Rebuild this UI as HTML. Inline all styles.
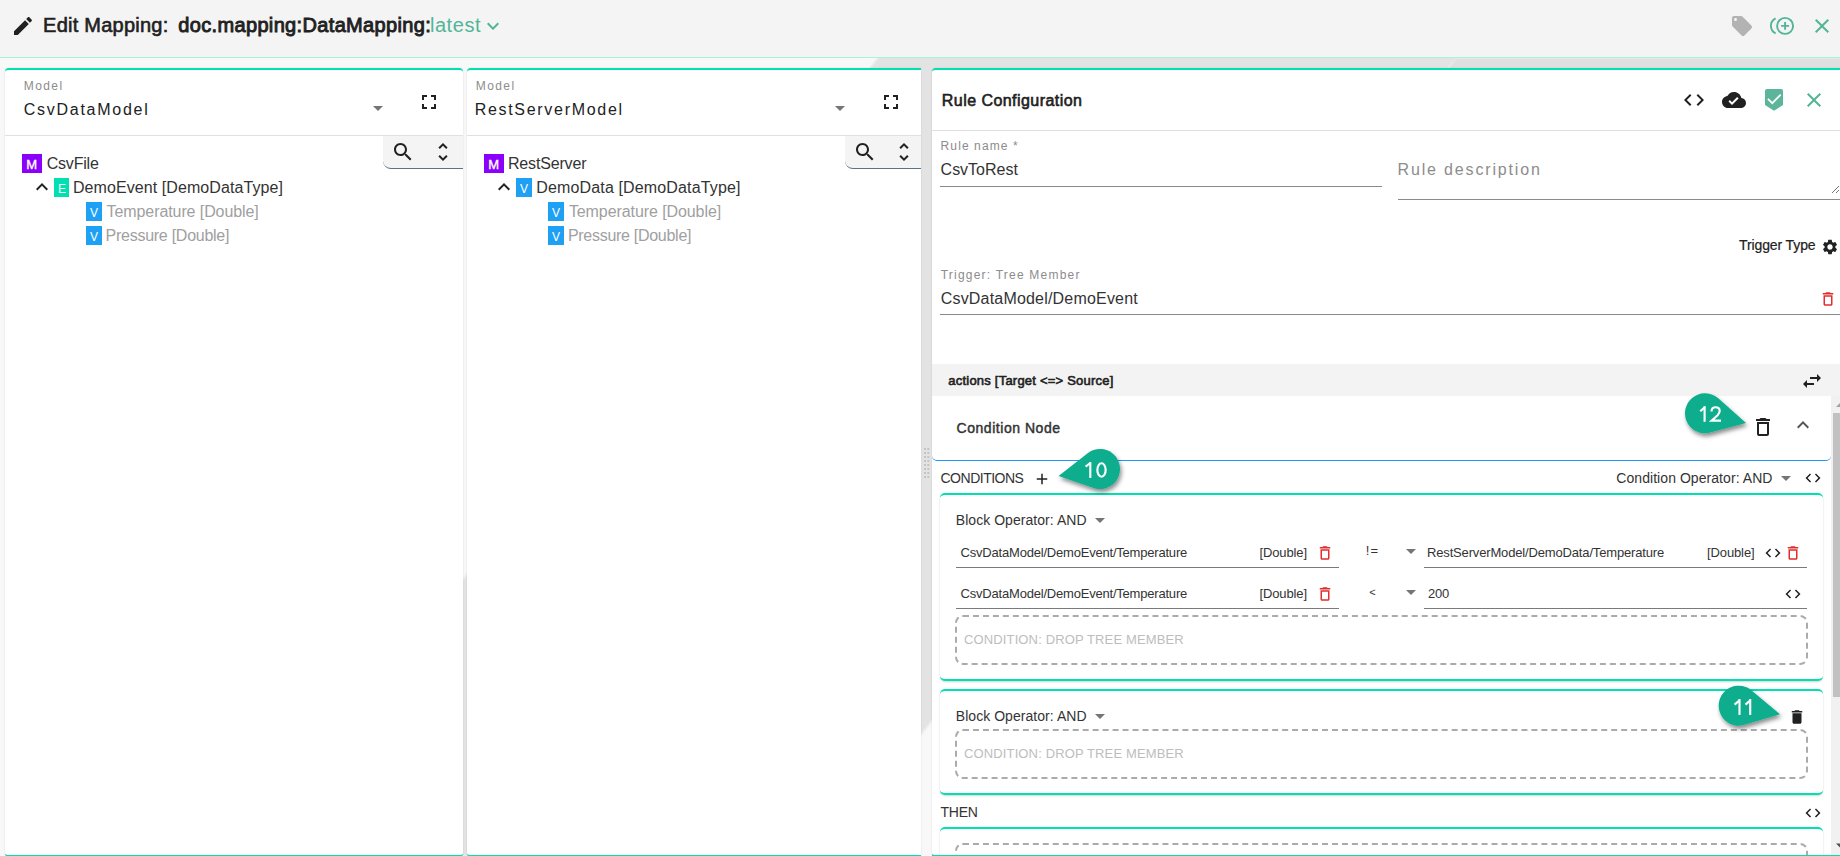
<!DOCTYPE html>
<html><head><meta charset="utf-8">
<title>Edit Mapping</title>
<style>
*{box-sizing:border-box;margin:0;padding:0}
html,body{width:1840px;height:856px;overflow:hidden;background:#f8f8f8;font-family:"Liberation Sans",sans-serif;color:#212121}
.a{position:absolute}
.t{position:absolute;white-space:nowrap;line-height:1}
svg{position:absolute;display:block;overflow:visible}
.panel{position:absolute;background:#fff;border-top:2px solid #00e0b0;border-bottom:2px solid #00e0b0;border-radius:4px;box-shadow:0 0 1.5px rgba(0,0,0,.16)}
.hl{position:absolute;height:1px}
.tab{position:absolute;top:136px;height:33px;background:#f4f4f4;border-bottom:1px solid #5d7282;border-bottom-left-radius:8px}
.card{position:absolute;background:#fff;border-top:2px solid #00e0b0;border-bottom:2px solid #00e0b0;border-radius:5px;box-shadow:0 1px 2px rgba(0,0,0,.18)}
.dash{position:absolute;border:2px dashed #ababab;border-radius:8px}
</style></head><body>
<!-- background stripes -->
<svg style="left:0;top:0" width="1840" height="856" viewBox="0 0 1840 856">
<defs><filter id="bl" x="-5%" y="-5%" width="110%" height="110%"><feGaussianBlur stdDeviation="1.2"/></filter></defs>
<polygon points="924,0 1502,0 825,856 243,856" fill="#e3e3e3" filter="url(#bl)"/>
<polygon points="1456,58 1900,58 1900,70 1447,70" fill="#dfdfdf" filter="url(#bl)"/>
</svg>
<!-- top bar -->
<div class="a" style="left:0;top:0;width:1840px;height:57px;background:#f4f4f4"></div>
<div class="a" style="left:0;top:57px;width:1840px;height:1px;background:#a6f2dd"></div>
<svg style="left:10.8px;top:14px" width="24" height="24" viewBox="0 0 24 24"><path fill="#212121" d="M3 17.25V21h3.75L17.81 9.94l-3.75-3.75L3 17.25zM20.71 7.04c.39-.39.39-1.02 0-1.41l-2.34-2.34c-.39-.39-1.02-.39-1.41 0l-1.83 1.83 3.75 3.75 1.83-1.83z"/></svg>
<svg style="left:481.4px;top:14.4px" width="24" height="24" viewBox="0 0 24 24"><path fill="#52b596" d="M16.59 8.59L12 13.17 7.41 8.59 6 10l6 6 6-6z"/></svg>
<!-- tag -->
<svg style="left:1729.7px;top:13.9px" width="24" height="24" viewBox="0 0 24 24"><path fill="#b3b3b3" d="M21.41 11.58l-9-9C12.05 2.22 11.55 2 11 2H4c-1.1 0-2 .9-2 2v7c0 .55.22 1.05.59 1.42l9 9c.36.36.86.58 1.41.58.55 0 1.05-.22 1.41-.59l7-7c.37-.36.59-.86.59-1.41 0-.55-.23-1.06-.59-1.42zM5.5 7C4.67 7 4 6.33 4 5.5S4.67 4 5.5 4 7 4.67 7 5.5 6.33 7 5.5 7z"/></svg>
<!-- add circle with arc -->
<svg style="left:1768px;top:14px" width="28" height="24" viewBox="0 0 28 24">
<circle cx="17.1" cy="11.9" r="8" fill="none" stroke="#52b596" stroke-width="1.9"/>
<path d="M17.1 8v7.8M13.1 11.9h8" stroke="#52b596" stroke-width="1.9" fill="none"/>
<path d="M7.6 4.3 A8.4 8.4 0 0 0 7.6 19.4" stroke="#52b596" stroke-width="1.9" fill="none"/>
</svg>
<!-- close -->
<svg style="left:1810px;top:14.3px" width="24" height="24" viewBox="0 0 24 24"><path fill="#52b596" d="M19 6.41L17.59 5 12 10.59 6.41 5 5 6.41 10.59 12 5 17.59 6.41 19 12 13.41 17.59 19 19 17.59 13.41 12z"/></svg>

<!-- panels -->
<div class="panel" style="left:5px;top:68px;width:458px;height:789px"></div>
<div class="panel" style="left:467px;top:68px;width:454px;height:789px;border-radius:4px 0 0 4px"></div>
<div class="panel" style="left:932px;top:68px;width:920px;height:789px"></div>

<!-- panel 1 header -->
<svg style="left:366px;top:96px" width="24" height="24" viewBox="0 0 24 24"><path fill="#757575" d="M7 10l5 5 5-5z"/></svg>
<svg style="left:416.9px;top:89.9px" width="24" height="24" viewBox="0 0 24 24"><path fill="#212121" d="M7 14H5v5h5v-2H7v-3zm-2-4h2V7h3V5H5v5zm12 7h-3v2h5v-5h-2v3zM14 5v2h3v3h2V5h-5z"/></svg>
<div class="hl" style="left:5px;top:135px;width:458px;background:#e0e0e0"></div>
<div class="tab" style="left:383px;width:80px"></div>
<svg style="left:391px;top:140px" width="24" height="24" viewBox="0 0 24 24"><path fill="#212121" d="M15.5 14h-.79l-.28-.27C15.41 12.59 16 11.11 16 9.5 16 5.91 13.09 3 9.5 3S3 5.91 3 9.5 5.91 16 9.5 16c1.61 0 3.09-.59 4.23-1.57l.27.28v.79l5 4.99L20.49 19l-4.99-5zm-6 0C7.01 14 5 11.990 5 9.5S7.01 5 9.5 5 14 7.01 14 9.5 11.99 14 9.5 14z"/></svg>
<svg style="left:431px;top:140.2px" width="24" height="24" viewBox="0 0 24 24"><path fill="#212121" d="M12 5.83L15.17 9l1.41-1.41L12 3 7.41 7.59 8.83 9 12 5.83zm0 12.34L8.83 15l-1.41 1.41L12 21l4.59-4.59L15.17 15 12 18.170z"/></svg>
<!-- panel 1 tree -->
<div class="a" style="left:22px;top:154px;width:20px;height:19px;background:#8a00fa"></div>
<div class="a" style="left:54px;top:178px;width:15px;height:19px;background:#00e0b0"></div>
<div class="a" style="left:86px;top:202px;width:16px;height:19px;background:#1ea0f5"></div>
<div class="a" style="left:86px;top:226px;width:16px;height:19px;background:#1ea0f5"></div>
<svg style="left:30px;top:175.3px" width="24" height="24" viewBox="0 0 24 24"><path fill="#212121" d="M12 8l-6 6 1.41 1.41L12 10.83l4.59 4.58L18 14z"/></svg>
<!-- panel 2 header -->
<svg style="left:828.4px;top:96px" width="24" height="24" viewBox="0 0 24 24"><path fill="#757575" d="M7 10l5 5 5-5z"/></svg>
<svg style="left:879px;top:89.9px" width="24" height="24" viewBox="0 0 24 24"><path fill="#212121" d="M7 14H5v5h5v-2H7v-3zm-2-4h2V7h3V5H5v5zm12 7h-3v2h5v-5h-2v3zM14 5v2h3v3h2V5h-5z"/></svg>
<div class="hl" style="left:467px;top:135px;width:454px;background:#e0e0e0"></div>
<div class="tab" style="left:845px;width:76px"></div>
<svg style="left:852.8px;top:140px" width="24" height="24" viewBox="0 0 24 24"><path fill="#212121" d="M15.5 14h-.79l-.28-.27C15.41 12.590 16 11.11 16 9.5 16 5.91 13.09 3 9.5 3S3 5.91 3 9.5 5.91 16 9.5 16c1.61 0 3.09-.59 4.23-1.57l.27.28v.79l5 4.99L20.49 19l-4.99-5zm-6 0C7.01 14 5 11.99 5 9.5S7.01 5 9.5 5 14 7.01 14 9.5 11.99 14 9.5 14z"/></svg>
<svg style="left:892.4px;top:140.2px" width="24" height="24" viewBox="0 0 24 24"><path fill="#212121" d="M12 5.83L15.17 9l1.41-1.41L12 3 7.41 7.59 8.83 9 12 5.83zm0 12.34L8.83 15l-1.41 1.41L12 21l4.59-4.59L15.17 15 12 18.17z"/></svg>
<!-- panel 2 tree -->
<div class="a" style="left:484px;top:154px;width:20px;height:19px;background:#8a00fa"></div>
<div class="a" style="left:516px;top:178px;width:16px;height:19px;background:#1ea0f5"></div>
<div class="a" style="left:548px;top:202px;width:16px;height:19px;background:#1ea0f5"></div>
<div class="a" style="left:548px;top:226px;width:16px;height:19px;background:#1ea0f5"></div>
<svg style="left:492.4px;top:175.3px" width="24" height="24" viewBox="0 0 24 24"><path fill="#212121" d="M12 8l-6 6 1.41 1.41L12 10.83l4.59 4.58L18 14z"/></svg>

<!-- right panel header -->
<div class="hl" style="left:932px;top:130px;width:908px;background:#e0e0e0"></div>
<svg style="left:1682px;top:87.8px" width="24" height="24" viewBox="0 0 24 24"><path fill="#212121" d="M9.4 16.6L4.8 12l4.6-4.6L8 6l-6 6 6 6 1.4-1.4zm5.2 0l4.6-4.6-4.6-4.6L16 6l6 6-6 6-1.4-1.4z"/></svg>
<svg style="left:1722px;top:88px" width="24" height="24" viewBox="0 0 24 24"><path fill="#212121" d="M19.35 10.04C18.67 6.59 15.64 4 12 4 9.11 4 6.6 5.64 5.35 8.04 2.34 8.36 0 10.91 0 14c0 3.31 2.690 6 6 6h13c2.76 0 5-2.24 5-5 0-2.64-2.05-4.78-4.65-4.96zM10 17l-3.5-3.5 1.41-1.41L10 14.17 15.18 9l1.41 1.41L10 17z"/></svg>
<svg style="left:1765px;top:89px" width="18" height="22" viewBox="0 0 18 22"><path fill="#5cb59a" d="M2 0h14a2 2 0 0 1 2 2v14l-9 5.8-9-5.8V2a2 2 0 0 1 2-2z"/><path d="M2.9 9.8l4.4 4.4 8.4-8.6" stroke="#fff" stroke-width="1.8" fill="none"/></svg>
<svg style="left:1802px;top:88px" width="24" height="24" viewBox="0 0 24 24"><path fill="#52b596" d="M19 6.41L17.59 5 12 10.59 6.41 5 5 6.41 10.59 12 5 17.59 6.41 19 12 13.41 17.59 19 19 17.59 13.41 12z"/></svg>
<!-- fields -->
<div class="hl" style="left:940px;top:186px;width:442px;background:#8a8a8a"></div>
<div class="hl" style="left:1398px;top:199px;width:442px;background:#8a8a8a"></div>
<svg style="left:1830px;top:184px" width="10" height="10" viewBox="0 0 10 10"><path d="M2 9L9 2M6 9L9 6" stroke="#666" stroke-width="0.9"/></svg>
<svg style="left:1820.6px;top:238.4px" width="18" height="18" viewBox="0 0 24 24"><path fill="#212121" d="M19.14 12.94c.04-.3.06-.61.06-.94 0-.32-.02-.64-.07-.94l2.03-1.58c.18-.14.23-.41.12-.61l-1.92-3.32c-.12-.22-.37-.29-.59-.22l-2.39.96c-.5-.38-1.03-.7-1.62-.94l-.36-2.54c-.04-.24-.24-.41-.48-.41h-3.840c-.24 0-.43.17-.47.41l-.36 2.54c-.59.24-1.13.57-1.62.94l-2.39-.96c-.22-.08-.47 0-.59.22L2.74 8.87c-.12.21-.08.47.12.61l2.03 1.58c-.05.3-.09.63-.09.94s.02.64.07.94l-2.03 1.58c-.18.14-.23.41-.12.61l1.92 3.32c.12.22.37.29.59.22l2.39-.96c.5.38 1.03.7 1.62.94l.36 2.54c.05.24.24.41.48.41h3.84c.24 0 .44-.17.47-.41l.36-2.54c.59-.24 1.13-.56 1.62-.94l2.39.96c.22.08.47 0 .59-.22l1.92-3.32c.12-.22.07-.47-.12-.61l-2.01-1.58zM12 15.6c-1.98 0-3.6-1.62-3.6-3.6s1.62-3.6 3.6-3.6 3.6 1.62 3.6 3.6-1.62 3.6-3.6 3.6z"/></svg>
<svg style="left:1819.1px;top:289.8px" width="18" height="18" viewBox="0 0 24 24"><path fill="#e22d2d" d="M6 19c0 1.1.9 2 2 2h8c1.1 0 2-.9 2-2V7H6v12zM8 9h8v10H8V9zm7.5-5l-1-1h-5l-1 1H5v2h14V4z"/></svg>
<div class="hl" style="left:940px;top:314px;width:900px;background:#8a8a8a"></div>
<!-- actions bar -->
<div class="a" style="left:932px;top:364px;width:908px;height:32px;background:#f3f3f3"></div>
<svg style="left:1800px;top:369px" width="24" height="24" viewBox="0 0 24 24"><path fill="#212121" d="M6.99 11L3 15l3.99 4v-3H14v-2H6.99v-3zM21 9l-3.99-4v3H10v2h7.01v3L21 9z"/></svg>
<!-- scrollbar -->
<div class="a" style="left:1831px;top:396px;width:9px;height:460px;background:#f1f1f1"></div>
<div class="a" style="left:1833px;top:413px;width:7px;height:284px;background:#c1c1c1"></div>
<svg style="left:1831px;top:400px" width="9" height="8" viewBox="0 0 9 8"><path d="M5 7L9.5 2.5 14 7z" fill="#a3a3a3"/></svg>
<svg style="left:1831px;top:842px" width="9" height="8" viewBox="0 0 9 8"><path d="M5 1.5L9.5 6 14 1.5z" fill="#505050"/></svg>
<!-- condition node card -->
<div class="a" style="left:932px;top:396px;width:899px;height:65px;background:#fff;border-bottom:1px solid #2196f3;border-radius:0 5px 5px 5px"></div>
<svg style="left:1751px;top:415px" width="24" height="24" viewBox="0 0 24 24"><path fill="#212121" d="M6 19c0 1.1.9 2 2 2h8c1.1 0 2-.9 2-2V7H6v12zM8 9h8v10H8V9zm7.5-5l-1-1h-5l-1 1H5v2h14V4z"/></svg>
<svg style="left:1791px;top:413px" width="24" height="24" viewBox="0 0 24 24"><path fill="#555" d="M12 8l-6 6 1.41 1.41L12 10.83l4.59 4.58L18 14z"/></svg>
<!-- drag dots -->
<svg style="left:923px;top:448px" width="8" height="32" viewBox="0 0 8 32"><g fill="#c4c4c4">
<rect x="1" y="0" width="2" height="2"/><rect x="4.3" y="0" width="2" height="2"/>
<rect x="1" y="4" width="2" height="2"/><rect x="4.3" y="4" width="2" height="2"/>
<rect x="1" y="8" width="2" height="2"/><rect x="4.3" y="8" width="2" height="2"/>
<rect x="1" y="12" width="2" height="2"/><rect x="4.3" y="12" width="2" height="2"/>
<rect x="1" y="16" width="2" height="2"/><rect x="4.3" y="16" width="2" height="2"/>
<rect x="1" y="20" width="2" height="2"/><rect x="4.3" y="20" width="2" height="2"/>
<rect x="1" y="24" width="2" height="2"/><rect x="4.3" y="24" width="2" height="2"/>
<rect x="1" y="28" width="2" height="2"/><rect x="4.3" y="28" width="2" height="2"/>
</g></svg>
<!-- conditions row -->
<svg style="left:1033px;top:470.3px" width="18" height="18" viewBox="0 0 24 24"><path fill="#212121" d="M19 13h-6v6h-2v-6H5v-2h6V5h2v6h6v2z"/></svg>
<svg style="left:1774px;top:466px" width="24" height="24" viewBox="0 0 24 24"><path fill="#757575" d="M7 10l5 5 5-5z"/></svg>
<svg style="left:1803.5px;top:468.6px" width="18" height="18" viewBox="0 0 24 24"><path fill="#212121" d="M9.4 16.6L4.8 12l4.6-4.6L8 6l-6 6 6 6 1.4-1.4zm5.2 0l4.6-4.6-4.6-4.6L16 6l6 6-6 6-1.4-1.4z"/></svg>

<!-- block card 1 -->
<div class="card" style="left:940px;top:493px;width:883px;height:188px"></div>
<svg style="left:1087.8px;top:508px" width="24" height="24" viewBox="0 0 24 24"><path fill="#757575" d="M7 10l5 5 5-5z"/></svg>
<div class="hl" style="left:956px;top:567px;width:383px;background:#7a7a7a"></div>
<div class="hl" style="left:1424px;top:567px;width:383px;background:#7a7a7a"></div>
<div class="hl" style="left:956px;top:608px;width:383px;background:#7a7a7a"></div>
<div class="hl" style="left:1424px;top:608px;width:383px;background:#7a7a7a"></div>
<svg style="left:1316.2px;top:543.8px" width="18" height="18" viewBox="0 0 24 24"><path fill="#e22d2d" d="M6 19c0 1.1.9 2 2 2h8c1.1 0 2-.9 2-2V7H6v12zM8 9h8v10H8V9zm7.5-5l-1-1h-5l-1 1H5v2h14V4z"/></svg>
<svg style="left:1316.2px;top:585px" width="18" height="18" viewBox="0 0 24 24"><path fill="#e22d2d" d="M6 19c0 1.1.9 2 2 2h8c1.1 0 2-.9 2-2V7H6v12zM8 9h8v10H8V9zm7.5-5l-1-1h-5l-1 1H5v2h14V4z"/></svg>
<svg style="left:1399px;top:538.7px" width="24" height="24" viewBox="0 0 24 24"><path fill="#757575" d="M7 10l5 5 5-5z"/></svg>
<svg style="left:1399px;top:579.8px" width="24" height="24" viewBox="0 0 24 24"><path fill="#757575" d="M7 10l5 5 5-5z"/></svg>
<svg style="left:1763.5px;top:544.3px" width="18" height="18" viewBox="0 0 24 24"><path fill="#212121" d="M9.4 16.6L4.8 12l4.6-4.6L8 6l-6 6 6 6 1.4-1.4zm5.2 0l4.6-4.6-4.6-4.6L16 6l6 6-6 6-1.4-1.4z"/></svg>
<svg style="left:1783.8px;top:543.8px" width="18" height="18" viewBox="0 0 24 24"><path fill="#e22d2d" d="M6 19c0 1.1.9 2 2 2h8c1.1 0 2-.9 2-2V7H6v12zM8 9h8v10H8V9zm7.5-5l-1-1h-5l-1 1H5v2h14V4z"/></svg>
<svg style="left:1783.5px;top:585px" width="18" height="18" viewBox="0 0 24 24"><path fill="#212121" d="M9.4 16.6L4.8 12l4.6-4.6L8 6l-6 6 6 6 1.4-1.4zm5.2 0l4.6-4.6-4.6-4.6L16 6l6 6-6 6-1.4-1.4z"/></svg>
<div class="dash" style="left:955px;top:615px;width:853px;height:50px"></div>

<!-- block card 2 -->
<div class="card" style="left:940px;top:689px;width:883px;height:106px"></div>
<svg style="left:1088px;top:703.8px" width="24" height="24" viewBox="0 0 24 24"><path fill="#757575" d="M7 10l5 5 5-5z"/></svg>
<svg style="left:1788.3px;top:707.8px" width="18" height="18" viewBox="0 0 24 24"><path fill="#212121" d="M6 19c0 1.1.9 2 2 2h8c1.1 0 2-.9 2-2V7H6v12zM19 4h-3.5l-1-1h-5l-1 1H5v2h14V4z"/></svg>
<div class="dash" style="left:955px;top:729px;width:853px;height:50px"></div>
<!-- then -->
<svg style="left:1803.5px;top:804.3px" width="18" height="18" viewBox="0 0 24 24"><path fill="#212121" d="M9.4 16.6L4.8 12l4.6-4.6L8 6l-6 6 6 6 1.4-1.4zm5.2 0l4.6-4.6-4.6-4.6L16 6l6 6-6 6-1.4-1.4z"/></svg>
<div class="card" style="left:940px;top:827px;width:883px;height:80px"></div>
<div class="dash" style="left:955px;top:843px;width:853px;height:60px"></div>
<!-- panel bottom border overlay for right panel -->
<div class="a" style="left:932px;top:855px;width:908px;height:2px;background:#00e0b0"></div>

<!-- callouts -->
<svg style="left:0;top:0" width="1840" height="856" viewBox="0 0 1840 856">
<defs><filter id="sh" x="-30%" y="-30%" width="160%" height="170%"><feDropShadow dx="1.5" dy="3" stdDeviation="2.2" flood-color="#000" flood-opacity="0.45"/></filter></defs>
<path filter="url(#sh)" fill="#0aad8e" d="M1058.6,476.0 L1087.67,453.25 A20,20 0 1 1 1093.54,487.93 Z"/>
<path filter="url(#sh)" fill="#0aad8e" d="M1746.0,422.9 L1710.24,432.60 A20,20 0 1 1 1718.26,398.33 Z"/>
<path filter="url(#sh)" fill="#0aad8e" d="M1780.0,714.3 L1744.39,724.87 A20,20 0 1 1 1751.57,690.39 Z"/>
</svg>
<svg style="left:0;top:0" width="1840" height="856" viewBox="0 0 1840 856">
<g fill="none" stroke="#fff" stroke-width="2.15">
<path d="M1085.6,466.6 L1090.3,463.0"/><path d="M1090.3,462.1 V477.9"/>
<ellipse cx="1101.5" cy="470" rx="4.15" ry="6.75"/>
<path d="M1700.3,411.2 L1704.8,407.2"/><path d="M1704.6,406.2 V421.8"/>
<path d="M1711.5,411.6 C1711.5,408.9 1713.3,407.2 1715.7,407.2 C1718.2,407.2 1719.7,408.9 1719.7,411.1 C1719.7,412.7 1719.0,413.7 1717.6,415.2 L1711.6,420.6 L1721,420.6"/>
<path d="M1734.6,704.6 L1739.6,700.2"/><path d="M1739.5,699.1 V714.9"/>
<path d="M1745.5,704.6 L1750.4,700.2"/><path d="M1750.2,699.1 V714.9"/>
</g></svg>
<div class="t" id="edit" style="left:43.10px;top:15px;font-size:20px;color:#212121;-webkit-text-stroke:0.6px #212121;letter-spacing:0.238px">Edit Mapping:</div>
<div class="t" id="docm" style="left:178.30px;top:15px;font-size:20px;color:#212121;-webkit-text-stroke:0.90px #212121;letter-spacing:0.342px">doc.mapping:DataMapping:</div>
<div class="t" id="latest" style="left:429.90px;top:15px;font-size:20px;color:#52b596;letter-spacing:0.571px">latest</div>
<div class="t" id="m1" style="left:23.70px;top:80px;font-size:12px;color:#8c8c8c;letter-spacing:1.446px">Model</div>
<div class="t" id="csvdm" style="left:23.70px;top:102px;font-size:16px;color:#212121;letter-spacing:1.739px">CsvDataModel</div>
<div class="t" id="csvfile" style="left:46.70px;top:156px;font-size:16px;color:#333333;letter-spacing:-0.190px">CsvFile</div>
<div class="t" id="demoev" style="left:72.90px;top:180px;font-size:16px;color:#333333;letter-spacing:0.085px">DemoEvent [DemoDataType]</div>
<div class="t" id="temp1" style="left:106.60px;top:204px;font-size:16px;color:#a0a0a0;letter-spacing:-0.090px">Temperature [Double]</div>
<div class="t" id="pres1" style="left:105.60px;top:228px;font-size:16px;color:#a0a0a0;letter-spacing:-0.264px">Pressure [Double]</div>
<div class="t" id="m2" style="left:475.70px;top:80px;font-size:12px;color:#8c8c8c;letter-spacing:1.446px">Model</div>
<div class="t" id="restm" style="left:474.70px;top:102px;font-size:16px;color:#212121;letter-spacing:1.697px">RestServerModel</div>
<div class="t" id="rests" style="left:507.90px;top:156px;font-size:16px;color:#333333;letter-spacing:-0.155px">RestServer</div>
<div class="t" id="demod" style="left:536.30px;top:180px;font-size:16px;color:#333333;letter-spacing:0.144px">DemoData [DemoDataType]</div>
<div class="t" id="temp2" style="left:568.90px;top:204px;font-size:16px;color:#a0a0a0;letter-spacing:-0.085px">Temperature [Double]</div>
<div class="t" id="pres2" style="left:567.90px;top:228px;font-size:16px;color:#a0a0a0;letter-spacing:-0.282px">Pressure [Double]</div>
<div class="t" id="rulecfg" style="left:941.80px;top:93px;font-size:16px;color:#212121;-webkit-text-stroke:0.6px #212121;letter-spacing:0.446px">Rule Configuration</div>
<div class="t" id="rname" style="left:940.60px;top:140px;font-size:12px;color:#8c8c8c;letter-spacing:1.103px">Rule name *</div>
<div class="t" id="csvtorest" style="left:940.60px;top:162px;font-size:16px;color:#333333;letter-spacing:-0.013px">CsvToRest</div>
<div class="t" id="rdesc" style="left:1397.50px;top:162px;font-size:16px;color:#8c8c8c;letter-spacing:1.845px">Rule description</div>
<div class="t" id="ttype" style="left:1739.00px;top:238px;font-size:14px;color:#212121;letter-spacing:-0.107px;-webkit-text-stroke:0.2px #212121">Trigger Type</div>
<div class="t" id="ttm" style="left:940.70px;top:269px;font-size:12px;color:#8c8c8c;letter-spacing:1.221px">Trigger: Tree Member</div>
<div class="t" id="csvdemo" style="left:940.70px;top:291px;font-size:16px;color:#333333;letter-spacing:0.194px">CsvDataModel/DemoEvent</div>
<div class="t" id="actions" style="left:948.30px;top:374px;font-size:13px;color:#212121;-webkit-text-stroke:0.59px #212121;letter-spacing:0.218px">actions [Target &lt;=&gt; Source]</div>
<div class="t" id="condnode" style="left:956.60px;top:421px;font-size:14px;color:#333333;-webkit-text-stroke:0.45px #333333;letter-spacing:0.529px">Condition Node</div>
<div class="t" id="conds" style="left:940.50px;top:471px;font-size:14px;color:#333333;letter-spacing:-0.495px">CONDITIONS</div>
<div class="t" id="condop" style="left:1616.30px;top:471px;font-size:14px;color:#333333;letter-spacing:0.058px">Condition Operator: AND</div>
<div class="t" id="blk1" style="left:955.80px;top:513px;font-size:14px;color:#333333;letter-spacing:0.044px">Block Operator: AND</div>
<div class="t" id="r1a" style="left:960.60px;top:546px;font-size:13px;color:#333333;letter-spacing:-0.204px">CsvDataModel/DemoEvent/Temperature</div>
<div class="t" id="r1d" style="left:1259.40px;top:546px;font-size:13px;color:#333333;letter-spacing:-0.101px">[Double]</div>
<div class="t" id="r1op" style="left:1365.80px;top:544px;font-size:13px;color:#333333;letter-spacing:1.088px">!=</div>
<div class="t" id="r1b" style="left:1427.00px;top:546px;font-size:13px;color:#333333;letter-spacing:-0.158px">RestServerModel/DemoData/Temperature</div>
<div class="t" id="r1d2" style="left:1707.00px;top:546px;font-size:13px;color:#333333;letter-spacing:-0.115px">[Double]</div>
<div class="t" id="r2a" style="left:960.60px;top:587px;font-size:13px;color:#333333;letter-spacing:-0.204px">CsvDataModel/DemoEvent/Temperature</div>
<div class="t" id="r2d" style="left:1259.40px;top:587px;font-size:13px;color:#333333;letter-spacing:-0.101px">[Double]</div>
<div class="t" id="r2op" style="left:1369.30px;top:587px;font-size:11px;color:#333333">&lt;</div>
<div class="t" id="r2b" style="left:1428.00px;top:587px;font-size:13px;color:#333333;letter-spacing:-0.230px">200</div>
<div class="t" id="drop1" style="left:964.00px;top:633px;font-size:13px;color:#bdbdbd;letter-spacing:0.133px">CONDITION: DROP TREE MEMBER</div>
<div class="t" id="blk2" style="left:955.80px;top:709px;font-size:14px;color:#333333;letter-spacing:0.044px">Block Operator: AND</div>
<div class="t" id="drop2" style="left:964.00px;top:747px;font-size:13px;color:#bdbdbd;letter-spacing:0.133px">CONDITION: DROP TREE MEMBER</div>
<div class="t" id="then" style="left:940.50px;top:805px;font-size:14px;color:#333333;letter-spacing:-0.250px">THEN</div>
<!-- badge letters -->
<div class="t" style="left:26.2px;top:158px;font-size:13px;color:#fff;-webkit-text-stroke:0.35px #fff">M</div>
<div class="t" style="left:58px;top:183px;font-size:12px;color:#fff">E</div>
<div class="t" style="left:90px;top:207px;font-size:12px;color:#fff">V</div>
<div class="t" style="left:90px;top:231px;font-size:12px;color:#fff">V</div>
<div class="t" style="left:488.2px;top:158px;font-size:13px;color:#fff;-webkit-text-stroke:0.35px #fff">M</div>
<div class="t" style="left:520px;top:183px;font-size:12px;color:#fff">V</div>
<div class="t" style="left:552px;top:207px;font-size:12px;color:#fff">V</div>
<div class="t" style="left:552px;top:231px;font-size:12px;color:#fff">V</div>
</body></html>
